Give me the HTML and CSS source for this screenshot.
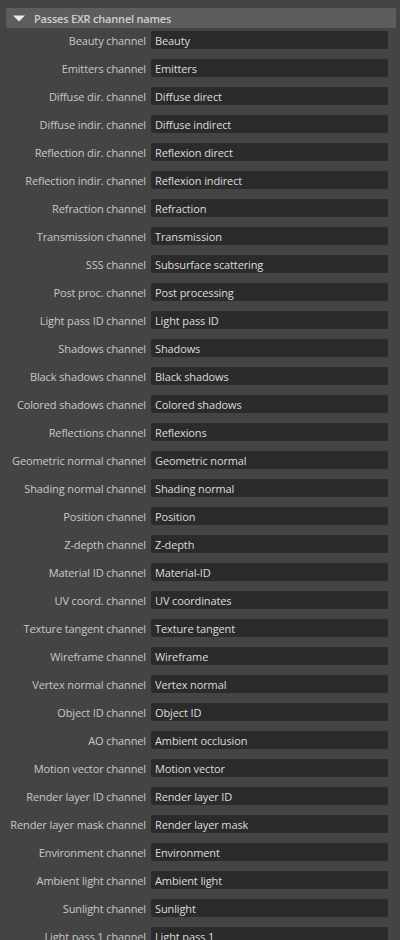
FILE: index.html
```html
<!DOCTYPE html>
<html>
<head>
<meta charset="utf-8">
<link rel="stylesheet" href="styles.css">
</head>
<body>
<div class="panel">
  <div class="section-header">
    <svg class="caret" width="12" height="7" viewBox="0 0 12 7"><polygon points="0,0.5 12,0.5 6,6.5" fill="#ececec"/></svg>
    <span class="section-title">Passes EXR channel names</span>
  </div>
  <div class="rows">
    <div class="row"><label class="lbl">Beauty channel</label><div class="field">Beauty</div></div>
    <div class="row"><label class="lbl">Emitters channel</label><div class="field">Emitters</div></div>
    <div class="row"><label class="lbl">Diffuse dir. channel</label><div class="field">Diffuse direct</div></div>
    <div class="row"><label class="lbl">Diffuse indir. channel</label><div class="field">Diffuse indirect</div></div>
    <div class="row"><label class="lbl">Reflection dir. channel</label><div class="field">Reflexion direct</div></div>
    <div class="row"><label class="lbl">Reflection indir. channel</label><div class="field">Reflexion indirect</div></div>
    <div class="row"><label class="lbl">Refraction channel</label><div class="field">Refraction</div></div>
    <div class="row"><label class="lbl">Transmission channel</label><div class="field">Transmission</div></div>
    <div class="row"><label class="lbl">SSS channel</label><div class="field">Subsurface scattering</div></div>
    <div class="row"><label class="lbl">Post proc. channel</label><div class="field">Post processing</div></div>
    <div class="row"><label class="lbl">Light pass ID channel</label><div class="field">Light pass ID</div></div>
    <div class="row"><label class="lbl">Shadows channel</label><div class="field">Shadows</div></div>
    <div class="row"><label class="lbl">Black shadows channel</label><div class="field">Black shadows</div></div>
    <div class="row"><label class="lbl">Colored shadows channel</label><div class="field">Colored shadows</div></div>
    <div class="row"><label class="lbl">Reflections channel</label><div class="field">Reflexions</div></div>
    <div class="row"><label class="lbl">Geometric normal channel</label><div class="field">Geometric normal</div></div>
    <div class="row"><label class="lbl">Shading normal channel</label><div class="field">Shading normal</div></div>
    <div class="row"><label class="lbl">Position channel</label><div class="field">Position</div></div>
    <div class="row"><label class="lbl">Z-depth channel</label><div class="field">Z-depth</div></div>
    <div class="row"><label class="lbl">Material ID channel</label><div class="field">Material-ID</div></div>
    <div class="row"><label class="lbl">UV coord. channel</label><div class="field">UV coordinates</div></div>
    <div class="row"><label class="lbl">Texture tangent channel</label><div class="field">Texture tangent</div></div>
    <div class="row"><label class="lbl">Wireframe channel</label><div class="field">Wireframe</div></div>
    <div class="row"><label class="lbl">Vertex normal channel</label><div class="field">Vertex normal</div></div>
    <div class="row"><label class="lbl">Object ID channel</label><div class="field">Object ID</div></div>
    <div class="row"><label class="lbl">AO channel</label><div class="field">Ambient occlusion</div></div>
    <div class="row"><label class="lbl">Motion vector channel</label><div class="field">Motion vector</div></div>
    <div class="row"><label class="lbl">Render layer ID channel</label><div class="field">Render layer ID</div></div>
    <div class="row"><label class="lbl">Render layer mask channel</label><div class="field">Render layer mask</div></div>
    <div class="row"><label class="lbl">Environment channel</label><div class="field">Environment</div></div>
    <div class="row"><label class="lbl">Ambient light channel</label><div class="field">Ambient light</div></div>
    <div class="row"><label class="lbl">Sunlight channel</label><div class="field">Sunlight</div></div>
    <div class="row"><label class="lbl">Light pass 1 channel</label><div class="field">Light pass 1</div></div>
  </div>
</div>
</body>
</html>
```
FILE: styles.css
```css
html, body {
  margin: 0;
  padding: 0;
  background: #444444;
  height: 940px;
  overflow: hidden;
}
body {
  font-family: "Open Sans", "DejaVu Sans", sans-serif;
  font-size: 11px;
  letter-spacing: -0.12px;
}
.panel {
  padding-top: 8px;
}
.section-header {
  margin: 0 4px 0 6px;
  height: 20px;
  background: #5d5d5d;
  border-radius: 2px;
  display: flex;
  align-items: center;
  gap: 9px;
  padding-left: 7px;
  box-sizing: border-box;
}
.caret {
  display: block;
  flex: none;
}
.section-title {
  color: #cfcfcf;
  font-weight: 600;
  letter-spacing: -0.2px;
}
.rows {
  padding-top: 3px;
  display: flex;
  flex-direction: column;
  gap: 10px;
}
.row {
  display: grid;
  grid-template-columns: 146px 237px;
  column-gap: 5px;
  height: 18px;
  align-items: center;
}
.lbl {
  text-align: right;
  color: #c8c8c8;
  white-space: nowrap;
  padding-top: 1px;
}
.field {
  height: 18px;
  line-height: 19px;
  background: #2b2b2b;
  color: #dcdcdc;
  padding-left: 4px;
  border-radius: 2px;
  white-space: nowrap;
}
```
